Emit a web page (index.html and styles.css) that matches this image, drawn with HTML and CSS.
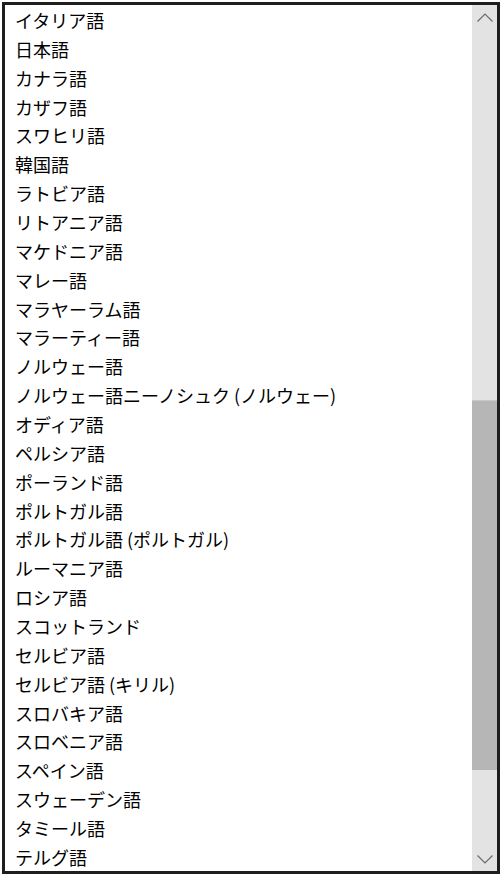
FILE: index.html
```html
<!DOCTYPE html>
<html lang="ja">
<head>
    <meta charset="UTF-8">
    <meta name="viewport" content="width=device-width, initial-scale=1.0">
    <title>言語の選択</title>
    <link rel="stylesheet" href="styles.css">
</head>
<body>
    <div class="dropdown">
        <ul class="options">
            <li>イタリア語</li>
            <li>日本語</li>
            <li>カナラ語</li>
            <li>カザフ語</li>
            <li>スワヒリ語</li>
            <li>韓国語</li>
            <li>ラトビア語</li>
            <li>リトアニア語</li>
            <li>マケドニア語</li>
            <li>マレー語</li>
            <li>マラヤーラム語</li>
            <li>マラーティー語</li>
            <li>ノルウェー語</li>
            <li>ノルウェー語ニーノシュク (ノルウェー)</li>
            <li>オディア語</li>
            <li>ペルシア語</li>
            <li>ポーランド語</li>
            <li>ポルトガル語</li>
            <li>ポルトガル語 (ポルトガル)</li>
            <li>ルーマニア語</li>
            <li>ロシア語</li>
            <li>スコットランド</li>
            <li>セルビア語</li>
            <li>セルビア語 (キリル)</li>
            <li>スロバキア語</li>
            <li>スロベニア語</li>
            <li>スペイン語</li>
            <li>スウェーデン語</li>
            <li>タミール語</li>
            <li>テルグ語</li>
        </ul>
        <div class="scrollbar">
            <div class="track-top">
                <svg class="arrow arrow-up" width="16" height="9" viewBox="0 0 16 9">
                    <polyline points="0.5,8.5 8,1 15.5,8.5" fill="none" stroke="#6b6b6b" stroke-width="1.2"/>
                </svg>
            </div>
            <div class="thumb"></div>
            <div class="track-bottom">
                <svg class="arrow arrow-down" width="16" height="9" viewBox="0 0 16 9">
                    <polyline points="0.5,0.5 8,8 15.5,0.5" fill="none" stroke="#6b6b6b" stroke-width="1.2"/>
                </svg>
            </div>
        </div>
    </div>
</body>
</html>
```

FILE: styles.css
```css
body {
    margin: 0;
    background: white;
    font-family: "Noto Sans CJK JP", "Noto Sans", sans-serif;
    color: black;
}
.dropdown {
    display: flex;
    box-sizing: border-box;
    width: 498px;
    height: 872px;
    margin: 2px 0 0 2px;
    border: 3px solid #1e1e1e;
    background: white;
}
.options {
    flex: 1;
    display: flex;
    flex-direction: column;
    list-style: none;
    margin: 0;
    padding: 0;
    overflow: hidden;
}
.options li {
    flex: 1;
    display: flex;
    align-items: center;
    padding-left: 10px;
    padding-top: 1px;
    font-size: 18px;
    white-space: nowrap;
}
.scrollbar {
    width: 25px;
    display: flex;
    flex-direction: column;
    background: #e3e3e3;
}
.track-top {
    height: 395px;
    display: flex;
    justify-content: center;
    align-items: flex-start;
    padding-top: 8px;
    box-sizing: border-box;
}
.thumb {
    height: 370px;
    background: #b6b6b6;
    border-top: 1px solid #c9c9c9;
    box-sizing: border-box;
}
.track-bottom {
    flex: 1;
    display: flex;
    justify-content: center;
    align-items: flex-end;
    padding-bottom: 7px;
    box-sizing: border-box;
}
```
